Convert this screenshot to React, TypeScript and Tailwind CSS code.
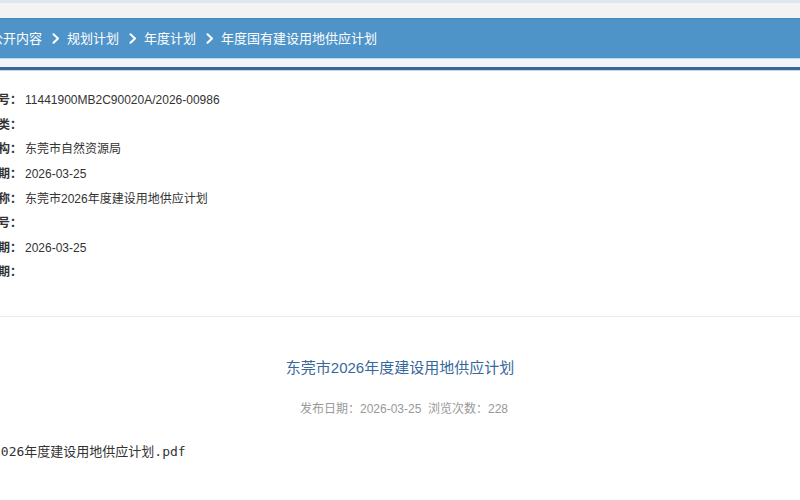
const crumbs = ['公开内容', '规划计划', '年度计划', '年度国有建设用地供应计划'];

const rows: [string, string][] = [
  ['索引号', '11441900MB2C90020A/2026-00986'],
  ['分类', ''],
  ['发布机构', '东莞市自然资源局'],
  ['成文日期', '2026-03-25'],
  ['名称', '东莞市2026年度建设用地供应计划'],
  ['文号', ''],
  ['发布日期', '2026-03-25'],
  ['废止日期', ''],
];

function Chevron() {
  return (
    <svg width="8" height="11" viewBox="0 0 8 11" className="ml-[10px] mr-[7px] shrink-0">
      <path d="M1.5 1.2 L6 5.5 L1.5 9.8" fill="none" stroke="white" strokeWidth="2" strokeLinecap="round" strokeLinejoin="round" />
    </svg>
  );
}

export default function App() {
  return (
    <div className="h-[500px] w-[800px] overflow-hidden bg-white font-['Liberation_Sans','Noto_Sans_CJK_SC',sans-serif]">
      <div className="h-[3px] bg-[#dfe6ef]" />
      <div className="h-[15px] bg-[#f3f3f3]" />
      <div className="flex h-[41px] items-center border-t border-b border-t-[#4a89bd] border-b-[#b9dcef] bg-[#4f94c9] text-[13px] text-white">
        <div className="ml-[-10px] flex items-center whitespace-nowrap">
          {crumbs.map((c, i) => (
            <div key={c} className="flex items-center">
              {i > 0 && <Chevron />}
              <span>{c}</span>
            </div>
          ))}
        </div>
      </div>
      <div className="h-[8px] bg-[#f2f4f9]" />
      <div className="h-[3px] bg-[#3b6594]" />
      <div className="h-px bg-[#bcdcf0]" />

      <div className="ml-[-74px] mt-[17px] flex flex-col text-[12px] text-[#333]">
        {rows.map(([k, v]) => (
          <div key={k} className="flex h-[24.6px] items-center">
            <span className="w-[96px] shrink-0 text-right font-bold">{k}：</span>
            <span className="ml-[3px]">{v}</span>
          </div>
        ))}
      </div>

      <div className="mt-[31px] h-px bg-[#e4ecea]" />

      <div className="mt-[40px] text-center text-[15px] text-[#36689c]">东莞市2026年度建设用地供应计划</div>
      <div className="mt-[21px] pl-[8px] text-center text-[12px] text-[#999]">
        发布日期：2026-03-25&nbsp;&nbsp;浏览次数：228
      </div>
      <div className="ml-[-7px] mt-[24px] text-[13px] text-[#333] font-['DejaVu_Sans_Mono','Noto_Sans_CJK_SC',monospace]">
        2026年度建设用地供应计划.pdf
      </div>
    </div>
  );
}
